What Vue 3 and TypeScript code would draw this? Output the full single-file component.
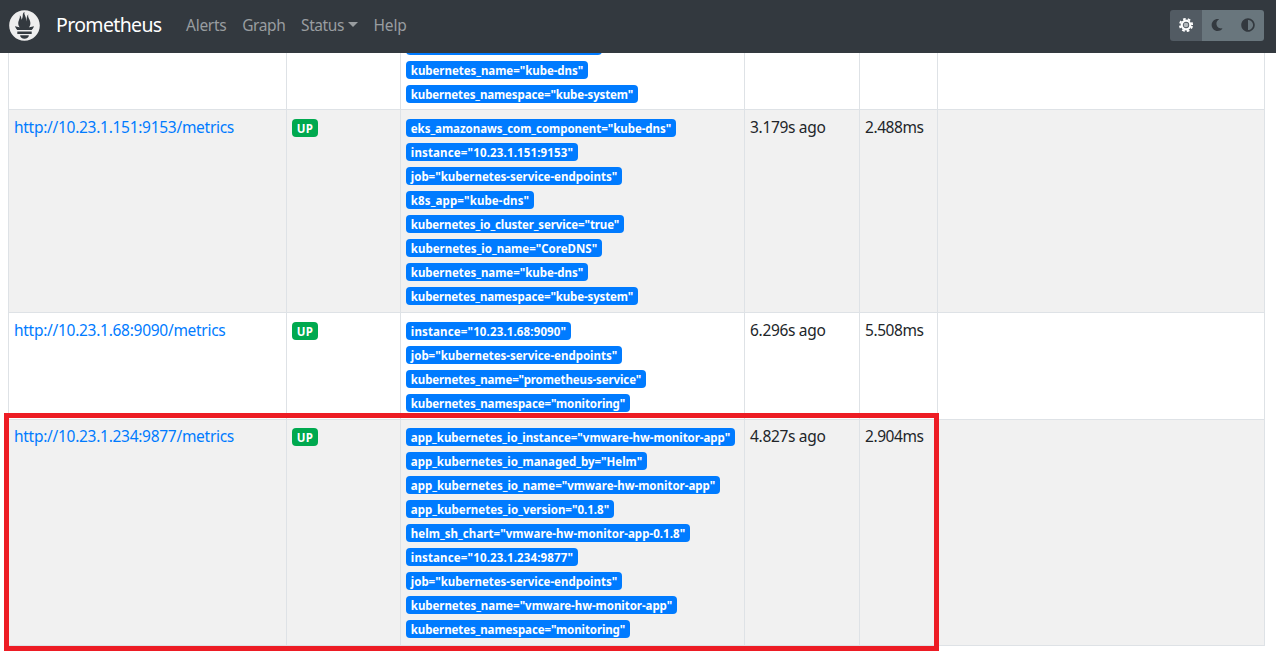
<script setup lang="ts">
interface Label { text: string; width: number }
interface Target {
  url: string
  urlWidth: number
  labels: Label[]
  lastScrape: string
  duration: string
  kind: string
}

const l = (text: string, width: number): Label => ({ text, width })

const navItems = [
  { text: 'Alerts', width: 40.5, caret: false },
  { text: 'Graph', width: 43.2, caret: false },
  { text: 'Status', width: 42.8, caret: true },
  { text: 'Help', width: 33, caret: false },
]

const partial: Label[] = [
  l('', 196),
  l('kubernetes_name="kube-dns"', 182),
  l('kubernetes_namespace="kube-system"', 232),
]

const targets: Target[] = [
  {
    url: 'http://10.23.1.151:9153/metrics', urlWidth: 220, lastScrape: '3.179s ago', duration: '2.488ms', kind: 'odd',
    labels: [
      l('eks_amazonaws_com_component="kube-dns"', 270),
      l('instance="10.23.1.151:9153"', 172),
      l('job="kubernetes-service-endpoints"', 216),
      l('k8s_app="kube-dns"', 128),
      l('kubernetes_io_cluster_service="true"', 218),
      l('kubernetes_io_name="CoreDNS"', 196),
      l('kubernetes_name="kube-dns"', 182),
      l('kubernetes_namespace="kube-system"', 232),
    ],
  },
  {
    url: 'http://10.23.1.68:9090/metrics', urlWidth: 211.5, lastScrape: '6.296s ago', duration: '5.508ms', kind: 'even',
    labels: [
      l('instance="10.23.1.68:9090"', 165),
      l('job="kubernetes-service-endpoints"', 216),
      l('kubernetes_name="prometheus-service"', 240),
      l('kubernetes_namespace="monitoring"', 224),
    ],
  },
  {
    url: 'http://10.23.1.234:9877/metrics', urlWidth: 220, lastScrape: '4.827s ago', duration: '2.904ms', kind: 'odd last',
    labels: [
      l('app_kubernetes_io_instance="vmware-hw-monitor-app"', 329),
      l('app_kubernetes_io_managed_by="Helm"', 241),
      l('app_kubernetes_io_name="vmware-hw-monitor-app"', 314),
      l('app_kubernetes_io_version="0.1.8"', 208),
      l('helm_sh_chart="vmware-hw-monitor-app-0.1.8"', 284),
      l('instance="10.23.1.234:9877"', 172),
      l('job="kubernetes-service-endpoints"', 216),
      l('kubernetes_name="vmware-hw-monitor-app"', 271),
      l('kubernetes_namespace="monitoring"', 224),
    ],
  },
]

// Tracks a text run so that it spans the given number of pixels.
const vFit = {
  mounted(el: HTMLElement, binding: { value: number }) {
    const natural = el.getBoundingClientRect().width
    const count = (el.textContent ?? '').length
    if (count) el.style.letterSpacing = `${(binding.value - natural) / count}px`
  },
}
</script>

<template>
  <div class="page">
    <header class="navbar">
      <svg class="logo" viewBox="0 0 113.333 114.667">
        <path fill="#eeeeee" d="M56.667.667C25.372.667 0 26.036 0 57.332c0 31.295 25.372 56.666 56.667 56.666 31.295 0 56.666-25.371 56.666-56.666 0-31.296-25.372-56.665-56.666-56.665zm0 106.055c-8.904 0-16.123-5.948-16.123-13.283H72.79c0 7.334-7.219 13.283-16.123 13.283zM83.297 89.04H30.034v-9.658h53.264v9.658zm-.191-14.629h-52.92c-.176-.203-.356-.403-.526-.609-5.452-6.62-6.736-10.076-7.983-13.598-.021-.116 6.611 1.355 11.314 2.413 0 0 2.42.56 5.958 1.205-3.397-3.982-5.414-9.044-5.414-14.218 0-11.359 8.712-21.285 5.569-29.308 3.059.249 6.331 6.456 6.552 16.161 3.252-4.494 4.613-12.701 4.613-17.733 0-5.21 3.433-11.262 6.867-11.469-3.061 5.045.793 9.37 4.219 20.099 1.285 4.03 1.121 10.812 2.113 15.113C63.797 33.534 65.333 20.5 71 16c-2.5 5.667.37 12.758 2.333 16.167 3.167 5.5 5.087 9.667 5.087 17.548 0 5.284-1.951 10.259-5.242 14.148 3.742-.702 6.326-1.335 6.326-1.335l12.152-2.371s-1.765 7.261-8.55 14.254z" />
      </svg>
      <span class="brand"><span v-fit="105.5">Prometheus</span></span>
      <nav class="nav">
        <a v-for="n in navItems" :key="n.text" class="nav-link"><span v-fit="n.width">{{ n.text }}</span><i v-if="n.caret" class="caret"></i></a>
      </nav>
      <div class="themes">
        <button class="theme active">
          <svg class="sun" viewBox="0 0 14 14">
            <circle cx="7" cy="7" r="4.3" stroke-width="2.2" />
            <circle cx="7" cy="7" r="6.1" stroke-width="1.9" stroke-dasharray="2.6 2.191" stroke-dashoffset="-1.1" />
            <circle class="core" cx="7" cy="7" r="2.3" />
          </svg>
        </button>
        <button class="theme">
          <svg class="moon" viewBox="0 0 512 512"><path d="M283.211 512c78.962 0 151.079-35.925 198.857-94.792 7.068-8.708-.639-21.43-11.562-19.35-124.203 23.654-238.262-71.576-238.262-196.954 0-72.222 38.662-138.635 101.498-174.394 9.686-5.512 7.25-20.197-3.756-22.23A258.156 258.156 0 0 0 283.211 0c-141.309 0-256 114.511-256 256 0 141.309 114.511 256 256 256z" /></svg>
        </button>
        <button class="theme">
          <svg viewBox="0 0 512 512"><path d="M8 256c0 136.966 111.033 248 248 248s248-111.034 248-248S392.966 8 256 8 8 119.033 8 256zm248 184V72c101.705 0 184 82.311 184 184 0 101.705-82.311 184-184 184z" /></svg>
        </button>
      </div>
    </header>

    <main class="table">
      <div class="row partial">
        <div class="cell"></div>
        <div class="cell"></div>
        <div class="cell labels">
          <span v-for="b in partial" :key="b.text" class="badge" :style="{ width: b.width + 'px' }"><span v-fit="b.width - 9.6">{{ b.text }}</span></span>
        </div>
        <div class="cell"></div>
        <div class="cell"></div>
        <div class="cell"></div>
      </div>
      <div v-for="t in targets" :key="t.url" class="row" :class="t.kind">
        <div class="cell"><a class="url"><span v-fit="t.urlWidth">{{ t.url }}</span></a></div>
        <div class="cell labels"><span class="badge up"><span v-fit="16.5">UP</span></span></div>
        <div class="cell labels">
          <span v-for="b in t.labels" :key="b.text" class="badge" :style="{ width: b.width + 'px' }"><span v-fit="b.width - 9.6">{{ b.text }}</span></span>
        </div>
        <div class="cell"><span v-fit="75.5">{{ t.lastScrape }}</span></div>
        <div class="cell"><span v-fit="58.5">{{ t.duration }}</span></div>
        <div class="cell"></div>
      </div>
    </main>
    <div class="highlight"></div>
  </div>
</template>

<style>
body { margin: 0; background: #fff; overflow: hidden; }
</style>

<style scoped>
.page {
  position: relative;
  width: 1276px;
  height: 658px;
  overflow: hidden;
  background: #fff;
  color: #212529;
  font-family: "Noto Sans", "Open Sans", sans-serif;
  font-size: 15.5px;
  white-space: nowrap;
}
.navbar {
  box-sizing: border-box;
  display: flex;
  align-items: center;
  height: 53px;
  padding: 0 12px 3px 9px;
  background: #33393f;
}
.logo { width: 31px; height: 31px; margin-right: 16px; }
.brand { width: 130px; padding-bottom: 1px; color: #fff; font-size: 19.5px; line-height: 30px; }
.nav { display: flex; gap: 15.7px; padding-bottom: 1px; color: #999da0; }
.nav-link { display: flex; align-items: center; line-height: 24px; }
.caret {
  margin: 0 0 1px 4px;
  border: 5px solid transparent;
  border-top-color: currentColor;
  border-bottom: 0;
}
.themes { display: flex; margin-left: auto; border-radius: 3px; overflow: hidden; }
.theme {
  box-sizing: border-box;
  display: flex;
  align-items: center;
  justify-content: center;
  width: 31px;
  height: 31px;
  padding: 0 1px 0 0;
  border: 0;
  background: #69767d;
  color: #33393f;
}
.theme.active { width: 32px; padding: 0; background: #525b63; color: #fff; }
.theme svg { width: 14px; height: 14px; fill: currentColor; }
.theme .sun { fill: none; stroke: currentColor; }
.sun .core { fill: #b4b9bc; stroke: none; }
.theme .moon { width: 12px; height: 12px; }

.table { width: 1257px; margin-left: 8px; }
.row {
  display: grid;
  grid-template-columns: 278px 114px 344px 115px 78px 327px;
  border: 1px solid #dee2e6;
  border-width: 1px 0 0 1px;
}
.row.partial { height: 56px; border-top: 0; overflow: hidden; }
.row.partial .labels { padding-top: 0; margin-top: -16px; }
.odd { background: #f1f1f1; }
.row.last { height: 225px; border-bottom-width: 1px; }
.row.last .cell { padding-top: 4px; }
.row.last .labels { padding-top: 8px; }
.cell {
  box-sizing: border-box;
  padding: 5px 5px 0;
  border-right: 1px solid #dee2e6;
  line-height: 24px;
}
.labels { display: flex; flex-direction: column; align-items: flex-start; padding: 9px 5px 1px; }
.url { color: #007bff; }
.badge {
  box-sizing: border-box;
  height: 18px;
  margin-bottom: 6px;
  padding-left: 4.8px;
  border-radius: 4px;
  background: #007bff;
  color: #fff;
  font-size: 11.5px;
  font-weight: 700;
  line-height: 20px;
}
.badge.up { width: 26px; background: #00a94f; }
.highlight {
  position: absolute;
  box-sizing: border-box;
  left: 4px;
  top: 413px;
  width: 935px;
  height: 238px;
  border: 5px solid #ed1c24;
}
</style>
